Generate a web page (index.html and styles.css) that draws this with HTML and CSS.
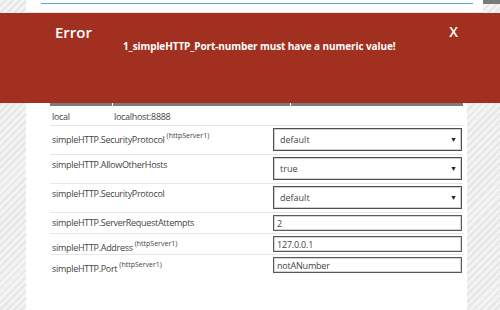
FILE: index.html
```html
<!DOCTYPE html>
<html lang="en">
<head>
    <meta charset="UTF-8">
    <title>Settings</title>
    <link rel="stylesheet" href="styles.css">
</head>
<body>

<div class="top">
    <div class="top-main"><div class="top-line"></div></div>
    <div class="top-corner"></div>
</div>

<div class="panel">
    <div class="settings">
        <div class="head">
            <div class="head-cell c1"></div>
            <div class="head-cell c2"></div>
            <div class="head-cell c3"></div>
        </div>

        <div class="row row-local">
            <span class="key">local</span>
            <span class="val">localhost:8888</span>
        </div>

        <div class="row row-tall">
            <div class="label">simpleHTTP.SecurityProtocol <sup>(httpServer1)</sup></div>
            <div class="select"><span>default</span><span class="arrow">&#9660;</span></div>
        </div>
        <div class="row row-tall">
            <div class="label">simpleHTTP.AllowOtherHosts</div>
            <div class="select"><span>true</span><span class="arrow">&#9660;</span></div>
        </div>
        <div class="row row-tall">
            <div class="label">simpleHTTP.SecurityProtocol</div>
            <div class="select"><span>default</span><span class="arrow">&#9660;</span></div>
        </div>
        <div class="row">
            <div class="label">simpleHTTP.ServerRequestAttempts</div>
            <input class="field" type="text" value="2">
        </div>
        <div class="row">
            <div class="label">simpleHTTP.Address <sup>(httpServer1)</sup></div>
            <input class="field" type="text" value="127.0.0.1">
        </div>
        <div class="row no-line">
            <div class="label">simpleHTTP.Port <sup>(httpServer1)</sup></div>
            <input class="field" type="text" value="notANumber">
        </div>
    </div>
</div>

<!-- error overlay -->
<div class="error-banner">
    <div class="error-head">
        <span class="error-title">Error</span>
        <span class="error-close">X</span>
    </div>
    <div class="error-msg">1_simpleHTTP_Port-number must have a numeric value!</div>
</div>

</body>
</html>
```

FILE: styles.css
```css
/* Base */
* {
    box-sizing: border-box;
    margin: 0;
    padding: 0;
}
body {
    width: 500px;
    height: 310px;
    overflow: hidden;
    position: relative;
    font-family: "Open Sans", Arial, sans-serif;
    color: #444;
    background: repeating-linear-gradient(135deg, #f3f3f3 0, #f3f3f3 3px, #e6e6e6 3px, #e6e6e6 5px);
}

/* Top strip */
.top {
    display: flex;
    height: 13px;
    padding-left: 26px;
}
.top-main {
    width: 457px;
    background-color: #ffffff;
    border-bottom: 1px solid #e2e2e2;
    padding: 3px 10px 0 15px;
}
.top-line {
    height: 1px;
    background-color: #5ea3d9;
}
.top-corner {
    flex: 1;
    border-top: 4px solid #7a7a7a;
}

/* Panel */
.panel {
    margin-left: 26px;
    width: 441px;
    height: 297px;
    background-color: #ffffff;
    padding: 73px 0 0 24px;
}
.settings {
    width: 413px;
}
.head {
    display: flex;
    gap: 1px;
    height: 20px;
}
.head-cell {
    border-bottom: 3px solid #7b7b7b;
}
.c1 { width: 62px; }
.c2 { width: 177px; }
.c3 { flex: 1; }

/* Rows */
.row {
    display: flex;
    align-items: flex-start;
    justify-content: space-between;
    height: 21px;
    padding: 2px 1px 0 2px;
    border-bottom: 1px solid #e6e6e6;
    font-size: 9px;
    letter-spacing: -0.3px;
}
.row-tall {
    height: 29px;
}
.row-local {
    justify-content: flex-start;
    height: 20px;
    padding-top: 4px;
}
.no-line {
    border-bottom: none;
}
.key {
    width: 62px;
}
.label {
    padding-top: 2px;
    line-height: 12px;
}
.label sup {
    font-size: 7px;
    letter-spacing: 0;
    vertical-align: 5px;
}

/* Controls */
.select {
    display: flex;
    justify-content: space-between;
    align-items: center;
    width: 189px;
    height: 23px;
    padding: 0 4px 0 6px;
    border: 1px solid #4f4f4f;
    box-shadow: inset 0 0 0 1px #cfcfcf;
    color: #444;
    font-size: 9px;
    letter-spacing: 0;
}
.arrow {
    font-size: 7px;
    color: #222;
}
.field {
    width: 189px;
    height: 16px;
    padding: 0 3px;
    border: 1px solid #5a5a5a;
    box-shadow: inset 0 0 0 1px #d4d4d4;
    font-family: "Open Sans", Arial, sans-serif;
    font-size: 9px;
    letter-spacing: -0.2px;
    color: #444;
    outline: none;
}

/* Error overlay */
.error-banner {
    position: absolute;
    top: 13px;
    left: 0;
    width: 500px;
    height: 90px;
    background-color: #a23020;
    color: #ffffff;
    padding: 11px 42px 0 55px;
}
.error-head {
    display: flex;
    justify-content: space-between;
    line-height: 16px;
}
.error-title {
    font-size: 15px;
    font-weight: 600;
}
.error-close {
    font-size: 14px;
    font-weight: 600;
}
.error-msg {
    margin-left: 68px;
    font-size: 10px;
    font-weight: bold;
    line-height: 12px;
    letter-spacing: -0.1px;
}
```
